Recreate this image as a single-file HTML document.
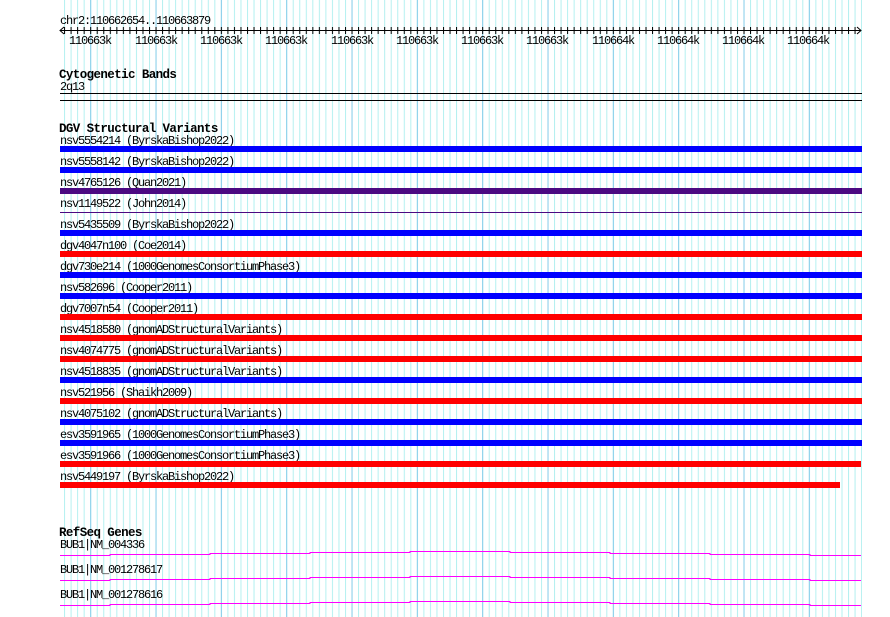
<!DOCTYPE html>
<html><head><meta charset="utf-8"><style>
html,body{margin:0;padding:0;background:#fff;}
svg{display:block;}
text{font-family:"Liberation Mono","DejaVu Sans Mono",monospace;font-size:12px;letter-spacing:-1.2px;fill:#000;}
.t{font-weight:bold;font-size:12.5px;letter-spacing:-0.6px;}
</style></head><body>
<svg width="890" height="617" viewBox="0 0 890 617" xmlns="http://www.w3.org/2000/svg">
<defs>
<pattern id="mn" patternUnits="userSpaceOnUse" x="90.2" y="0" width="6.533" height="10"><rect x="0" y="0" width="1" height="10" fill="#b4f0f0"/></pattern>
<pattern id="mj" patternUnits="userSpaceOnUse" x="90.2" y="0" width="65.33" height="10"><rect x="0" y="0" width="1" height="10" fill="#87cdea"/></pattern>
<pattern id="tk" patternUnits="userSpaceOnUse" x="90.2" y="0" width="6.533" height="10"><rect x="0" y="0" width="1" height="10" fill="#000"/></pattern>
</defs>
<rect x="62" y="0" width="800" height="617" fill="url(#mn)"/>
<rect x="62" y="0" width="800" height="617" fill="url(#mj)"/>
<text x="60" y="24">chr2:110662654..110663879</text>
<rect x="60" y="30" width="801" height="1" fill="#000"/>
<rect x="62" y="27" width="797" height="7" fill="url(#tk)"/>
<path d="M64,27 L60,30.5 L64,34 M857,27 L861,30.5 L857,34" stroke="#000" fill="none"/>
<g text-anchor="middle">
<text x="90" y="44">110663k</text><text x="156" y="44">110663k</text><text x="221" y="44">110663k</text><text x="286" y="44">110663k</text><text x="352" y="44">110663k</text><text x="417" y="44">110663k</text><text x="482" y="44">110663k</text><text x="547" y="44">110663k</text><text x="613" y="44">110664k</text><text x="678" y="44">110664k</text><text x="743" y="44">110664k</text><text x="808" y="44">110664k</text>
</g>
<text class="t" x="59" y="78">Cytogenetic Bands</text>
<text x="60" y="90">2q13</text>
<rect x="60" y="93" width="802" height="1" fill="#000"/>
<rect x="60" y="100" width="802" height="1" fill="#000"/>
<text class="t" x="59" y="132">DGV Structural Variants</text>
<g>
<text x="60" y="144">nsv5554214 (ByrskaBishop2022)</text><rect x="60" y="146" width="802" height="6" fill="#0000ff"/>
<text x="60" y="165">nsv5558142 (ByrskaBishop2022)</text><rect x="60" y="167" width="802" height="6" fill="#0000ff"/>
<text x="60" y="186">nsv4765126 (Quan2021)</text><rect x="60" y="188" width="802" height="6" fill="#4b0a82"/>
<text x="60" y="207">nsv1149522 (John2014)</text><rect x="60" y="212" width="802" height="1" fill="#4b0a82"/>
<text x="60" y="228">nsv5435509 (ByrskaBishop2022)</text><rect x="60" y="230" width="802" height="6" fill="#0000ff"/>
<text x="60" y="249">dgv4047n100 (Coe2014)</text><rect x="60" y="251" width="802" height="6" fill="#ff0000"/>
<text x="60" y="270">dgv730e214 (1000GenomesConsortiumPhase3)</text><rect x="60" y="272" width="802" height="6" fill="#0000ff"/>
<text x="60" y="291">nsv582696 (Cooper2011)</text><rect x="60" y="293" width="802" height="6" fill="#0000ff"/>
<text x="60" y="312">dgv7007n54 (Cooper2011)</text><rect x="60" y="314" width="802" height="6" fill="#ff0000"/>
<text x="60" y="333">nsv4518580 (gnomADStructuralVariants)</text><rect x="60" y="335" width="802" height="6" fill="#ff0000"/>
<text x="60" y="354">nsv4074775 (gnomADStructuralVariants)</text><rect x="60" y="356" width="802" height="6" fill="#ff0000"/>
<text x="60" y="375">nsv4518835 (gnomADStructuralVariants)</text><rect x="60" y="377" width="802" height="6" fill="#0000ff"/>
<text x="60" y="396">nsv521956 (Shaikh2009)</text><rect x="60" y="398" width="802" height="6" fill="#ff0000"/>
<text x="60" y="417">nsv4075102 (gnomADStructuralVariants)</text><rect x="60" y="419" width="802" height="6" fill="#0000ff"/>
<text x="60" y="438">esv3591965 (1000GenomesConsortiumPhase3)</text><rect x="60" y="440" width="802" height="6" fill="#0000ff"/>
<text x="60" y="459">esv3591966 (1000GenomesConsortiumPhase3)</text><rect x="60" y="461" width="801" height="6" fill="#ff0000"/>
<text x="60" y="480">nsv5449197 (ByrskaBishop2022)</text><rect x="60" y="482" width="780" height="6" fill="#ff0000"/>
</g>
<text class="t" x="59" y="536">RefSeq Genes</text>
<text x="60" y="548">BUB1|NM_004336</text>
<text x="60" y="573">BUB1|NM_001278617</text>
<text x="60" y="598">BUB1|NM_001278616</text>
<g fill="none" stroke="#ff00ff" stroke-width="1">
<path d="M60,555.5H110V554.5H210V553.5H310V552.5H410V551.5H510V552.5H610V553.5H710V554.5H810V555.5H861"/>
<path d="M60,580.5H110V579.5H210V578.5H310V577.5H410V576.5H510V577.5H610V578.5H710V579.5H810V580.5H861"/>
<path d="M60,605.5H110V604.5H210V603.5H310V602.5H410V601.5H510V602.5H610V603.5H710V604.5H810V605.5H861"/>
</g>
</svg>
</body></html>
